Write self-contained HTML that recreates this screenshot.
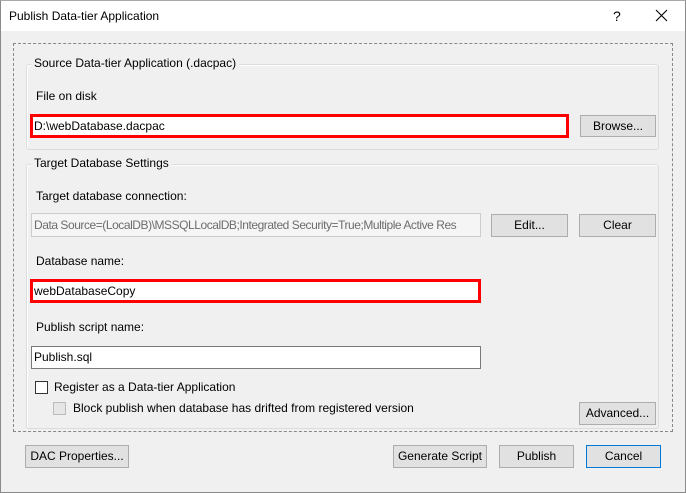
<!DOCTYPE html>
<html><head><style>
*{box-sizing:border-box;margin:0;padding:0}
body{width:686px;height:493px;overflow:hidden;background:#f0f0f0;font-family:"Liberation Sans",sans-serif;font-size:12px;color:#000;position:relative;letter-spacing:0}
.a{position:absolute;white-space:nowrap}
.win{position:absolute;left:0;top:0;width:686px;height:493px;border:1px solid #8a8a8a;border-top-color:#aaa}
.title{position:absolute;left:1px;top:1px;width:684px;height:30px;background:#fff}
.btn{position:absolute;background:#e1e1e1;border:1px solid #adadad;text-align:center;line-height:21px}
.grp{position:absolute;border:1px solid #dcdcdc;border-radius:3px;box-shadow:inset 1px 1px 0 #fff}
.lbl{position:absolute;background:#f0f0f0;padding:0 3px;line-height:14px}
.tb{position:absolute;background:#fff;border:1px solid #7a7a7a;line-height:20px;padding-left:2px;overflow:hidden}
.red{position:absolute;border:3px solid #f00;background:#fff;line-height:18px;padding-left:1px;overflow:hidden}
.cb{position:absolute;width:13px;height:13px;border:1px solid #333;background:#fff}
</style></head><body>
<div class="win"></div>
<div class="title"></div>
<div class="a" style="left:9px;top:9px">Publish Data-tier Application</div>
<div class="a" style="left:613px;top:8px;font-size:14px">?</div>
<svg class="a" style="left:655px;top:9px" width="13" height="13"><path d="M1 1L12 12M12 1L1 12" stroke="#000" stroke-width="1.1"/></svg>
<div class="a" style="left:13px;top:43px;width:660px;height:389px;border:1px dashed #888"></div>

<div class="grp" style="left:26px;top:64px;width:633px;height:86px"></div>
<div class="lbl" style="left:31px;top:56px">Source Data-tier Application (.dacpac)</div>
<div class="a" style="left:36px;top:89px">File on disk</div>
<div class="red" style="left:30px;top:114px;width:539px;height:24px">D:\webDatabase.dacpac</div>
<div class="btn" style="left:580px;top:115px;width:76px;height:22px">Browse...</div>

<div class="grp" style="left:26px;top:164px;width:633px;height:265px"></div>
<div class="lbl" style="left:31px;top:156px">Target Database Settings</div>
<div class="a" style="left:36px;top:189px">Target database connection:</div>
<div class="tb" style="left:31px;top:213px;width:450px;height:24px;border-color:#ccc;color:#6d6d6d;background:#f5f5f5;letter-spacing:-0.45px;line-height:22px;white-space:nowrap">Data Source=(LocalDB)\MSSQLLocalDB;Integrated Security=True;Multiple Active Res</div>
<div class="btn" style="left:491px;top:214px;width:77px;height:23px">Edit...</div>
<div class="btn" style="left:579px;top:214px;width:77px;height:23px">Clear</div>
<div class="a" style="left:36px;top:254px">Database name:</div>
<div class="red" style="left:30px;top:279px;width:451px;height:24px">webDatabaseCopy</div>
<div class="a" style="left:36px;top:320px">Publish script name:</div>
<div class="tb" style="left:31px;top:346px;width:450px;height:23px">Publish.sql</div>
<div class="cb" style="left:35px;top:381px"></div>
<div class="a" style="left:54px;top:380px">Register as a Data-tier Application</div>
<div class="cb" style="left:53px;top:402px;border-color:#bcbcbc;background:#e6e6e6"></div>
<div class="a" style="left:73px;top:401px">Block publish when database has drifted from registered version</div>
<div class="btn" style="left:579px;top:402px;width:77px;height:23px">Advanced...</div>

<div class="btn" style="left:25px;top:445px;width:104px;height:23px">DAC Properties...</div>
<div class="btn" style="left:393px;top:445px;width:94px;height:23px">Generate Script</div>
<div class="btn" style="left:499px;top:445px;width:75px;height:23px">Publish</div>
<div class="btn" style="left:586px;top:445px;width:75px;height:23px;border-color:#0078d7">Cancel</div>
</body></html>
